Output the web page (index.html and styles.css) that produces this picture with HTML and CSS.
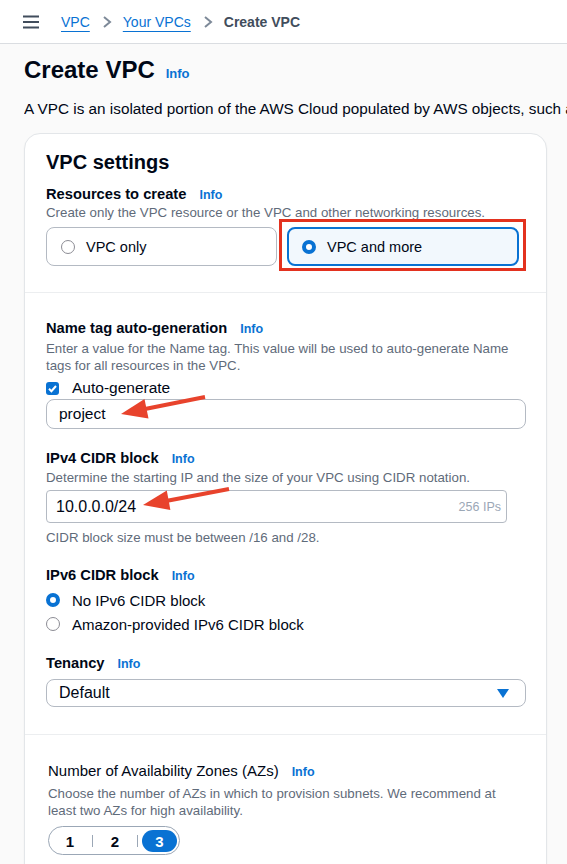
FILE: index.html
```html
<!DOCTYPE html>
<html lang="en">
<head>
<meta charset="utf-8">
<title>Create VPC</title>
<link rel="stylesheet" href="styles.css">
</head>
<body>
<header class="topbar">
  <svg class="menu" width="16" height="16" viewBox="0 0 16 16"><path d="M0 2.5h16M0 8h16M0 13.5h16" stroke="#414d5c" stroke-width="2" fill="none"/></svg>
  <nav class="crumbs">
    <a class="crumb-link" href="#">VPC</a>
    <svg class="chev" width="12" height="14" viewBox="0 0 12 14"><path d="M3 2l6 5-6 5" stroke="#7d8998" stroke-width="2" fill="none"/></svg>
    <a class="crumb-link" href="#">Your VPCs</a>
    <svg class="chev" width="12" height="14" viewBox="0 0 12 14"><path d="M3 2l6 5-6 5" stroke="#7d8998" stroke-width="2" fill="none"/></svg>
    <span class="crumb-current">Create VPC</span>
  </nav>
</header>
<main class="page">
  <div class="title-row"><h1 class="title">Create VPC</h1><a class="info info-lg" href="#">Info</a></div>
  <p class="intro">A VPC is an isolated portion of the AWS Cloud populated by AWS objects, such as Amazon EC2 instances.</p>
  <section class="card">
    <div class="sec sec-top">
      <h2 class="card-title">VPC settings</h2>
      <div class="label-row"><span class="label">Resources to create</span><a class="info" href="#">Info</a></div>
      <p class="desc">Create only the VPC resource or the VPC and other networking resources.</p>
      <div class="tiles">
        <div class="tile"><span class="radio"></span><span>VPC only</span></div>
        <div class="tile tile-on"><span class="radio radio-on"></span><span>VPC and more</span></div>
      </div>
    </div>
    <div class="sec sec-mid">
      <div class="label-row"><span class="label">Name tag auto-generation</span><a class="info" href="#">Info</a></div>
      <p class="desc desc-2">Enter a value for the Name tag. This value will be used to auto-generate Name tags for all resources in the VPC.</p>
      <div class="check-row"><span class="checkbox"><svg width="13" height="13" viewBox="0 0 13 13"><path d="M3 6.8l2.4 2.4L10 4" stroke="#fff" stroke-width="2" fill="none"/></svg></span><span>Auto-generate</span></div>
      <div class="field field-project">project</div>

      <div class="label-row lr-ipv4"><span class="label">IPv4 CIDR block</span><a class="info" href="#">Info</a></div>
      <p class="desc desc-1">Determine the starting IP and the size of your VPC using CIDR notation.</p>
      <div class="field field-cidr"><span>10.0.0.0/24</span><span class="ips">256 IPs</span></div>
      <p class="desc desc-constraint">CIDR block size must be between /16 and /28.</p>

      <div class="label-row lr-ipv6"><span class="label">IPv6 CIDR block</span><a class="info" href="#">Info</a></div>
      <div class="radio-list">
        <div class="radio-row"><span class="radio radio-on"></span><span>No IPv6 CIDR block</span></div>
        <div class="radio-row"><span class="radio"></span><span>Amazon-provided IPv6 CIDR block</span></div>
      </div>

      <div class="label-row lr-tenancy"><span class="label">Tenancy</span><a class="info" href="#">Info</a></div>
      <div class="field field-select"><span>Default</span><svg width="12" height="9" viewBox="0 0 12 9"><path d="M0 0h12L6 9z" fill="#0972d3"/></svg></div>
    </div>
    <div class="sec sec-az">
      <div class="label-row"><span class="label label-plain">Number of Availability Zones (AZs)</span><a class="info" href="#">Info</a></div>
      <p class="desc desc-2 desc-az">Choose the number of AZs in which to provision subnets. We recommend at least two AZs for high availability.</p>
      <div class="segmented">
        <span class="seg">1</span><span class="seg-sep"></span>
        <span class="seg">2</span><span class="seg-sep"></span>
        <span class="seg seg-on">3</span>
      </div>
    </div>
  </section>
</main>
<svg class="annot" width="567" height="864" viewBox="0 0 567 864">
  <rect x="280.5" y="220.5" width="244" height="49" fill="none" stroke="#e3321f" stroke-width="3"/>
  <line x1="205" y1="397" x2="145" y2="409" stroke="#e8432c" stroke-width="4"/>
  <polygon points="121,414 148.5,418.6 144.5,399" fill="#e8432c"/>
  <line x1="229" y1="489" x2="166" y2="501" stroke="#e8432c" stroke-width="4"/>
  <polygon points="143,505 170.4,510 166.8,490.4" fill="#e8432c"/>
</svg>
</body>
</html>
```

FILE: styles.css
```css
html, body {
  margin: 0;
  padding: 0;
}
body {
  position: relative;
  font-family: "Liberation Sans", Arial, sans-serif;
  color: #000716;
  background: #fafafa;
  overflow-x: hidden;
}
a { text-decoration: none; }

.topbar {
  height: 43px;
  background: #fff;
  border-bottom: 1px solid #dadde1;
  display: flex;
  align-items: center;
  padding-left: 23px;
}
.menu { margin-right: 22px; }
.crumbs {
  display: flex;
  align-items: center;
  font-size: 14px;
}
.crumb-link {
  color: #0972d3;
  text-decoration: underline;
  text-underline-offset: 4px;
  text-decoration-thickness: 1px;
}
.chev { margin: 0 10px 0 11px; }
.crumb-current { color: #414d5c; font-weight: 600; }

.page { padding: 0 20px 0 24px; }
.title-row {
  display: flex;
  align-items: baseline;
  height: 28px;
  margin-top: 12px;
}
.title {
  margin: 0;
  font-size: 24px;
  line-height: 28px;
  font-weight: 700;
}
.info {
  color: #0972d3;
  font-weight: 700;
  font-size: 12.5px;
  margin-left: 13px;
}
.info-lg { font-size: 13px; margin-left: 11px; }
.intro {
  margin: 15px -20px 0 0;
  font-size: 15.3px;
  line-height: 20px;
  white-space: nowrap;
  overflow: hidden;
}

.card {
  margin-top: 14px;
  background: #fff;
  border: 1px solid #e3e6e9;
  border-radius: 16px;
  box-shadow: 0 1px 2px rgba(0, 7, 22, 0.05);
}
.sec { padding: 0 20px 0 21px; }
.sec-top { padding-top: 16px; padding-bottom: 26px; }
.sec-mid { border-top: 1px solid #eceef0; padding-top: 25px; padding-bottom: 27px; }
.sec-az { border-top: 1px solid #eceef0; padding-top: 26px; padding-bottom: 40px; padding-left: 23px; }

.card-title {
  margin: 0;
  font-size: 20px;
  line-height: 24px;
  font-weight: 700;
}
.label-row {
  display: flex;
  align-items: baseline;
  height: 20px;
  line-height: 20px;
  overflow: visible;
}
.sec-top .label-row { margin-top: 10px; }
.label { font-size: 14.7px; font-weight: 700; }
.label-plain { font-size: 15px; font-weight: 400; }
.desc {
  margin: 0;
  font-size: 13.3px;
  line-height: 17px;
  color: #5f6b7a;
}
.desc-2 { margin-top: 2px; }
.sec-az .desc-2 { margin-top: 4px; }
.desc-az { max-width: 462px; }
.desc-1 { margin-top: 1px; }
.desc-constraint { margin-top: 6px; }

.tiles {
  margin-top: 6px;
  display: grid;
  grid-template-columns: 231px 232px;
  column-gap: 10px;
}
.tile {
  box-sizing: border-box;
  height: 39px;
  display: flex;
  align-items: center;
  gap: 11px;
  padding-left: 14px;
  border: 1px solid #b4bac3;
  border-radius: 8px;
  font-size: 14.5px;
}
.tile-on {
  border: 2px solid #0972d3;
  background: #f2f8fd;
  padding-left: 13px;
}
.radio {
  box-sizing: border-box;
  width: 14px;
  height: 14px;
  border-radius: 50%;
  border: 1.5px solid #8c8c94;
  background: #fff;
  flex: none;
}
.radio-on { border: 4px solid #0972d3; }

.check-row {
  margin-top: 4px;
  height: 20px;
  display: flex;
  align-items: center;
  gap: 13px;
  font-size: 15.5px;
}
.checkbox {
  width: 13px;
  height: 13px;
  border-radius: 3px;
  background: #0972d3;
  display: flex;
}

.field {
  box-sizing: border-box;
  display: flex;
  align-items: center;
  border: 1px solid #b4bac3;
  font-size: 15.5px;
  background: #fff;
}
.field-project {
  margin-top: 1px;
  height: 30px;
  border-radius: 8px;
  padding-left: 12px;
}
.lr-ipv4 { margin-top: 19px; }
.field-cidr {
  margin-top: 4px;
  width: 461px;
  height: 33px;
  border-radius: 4px;
  justify-content: space-between;
  padding: 0 5px 0 9px;
  font-size: 16px;
}
.ips { font-size: 12.5px; color: #9ba7b6; }
.lr-ipv6 { margin-top: 19px; }
.radio-list { margin-top: 3px; }
.radio-row {
  height: 24px;
  display: flex;
  align-items: center;
  gap: 12px;
  font-size: 15px;
}
.lr-tenancy { margin-top: 17px; }
.field-select {
  margin-top: 6px;
  height: 28px;
  border-radius: 8px;
  justify-content: space-between;
  padding: 0 16px 0 12px;
  font-size: 16px;
}

.segmented {
  margin-top: 7px;
  display: inline-flex;
  align-items: center;
  border: 1px solid #9ba7b6;
  border-radius: 16px;
  padding: 3px 2px 2px 3px;
}
.seg {
  width: 36px;
  height: 22px;
  display: flex;
  align-items: center;
  justify-content: center;
  font-size: 15px;
  font-weight: 600;
  color: #000716;
}
.seg-on {
  width: 35px;
  background: #0972d3;
  color: #fff;
  font-weight: 700;
  border-radius: 12px;
}
.seg-sep {
  width: 1px;
  height: 12px;
  background: #9ba7b6;
  margin: 0 4px;
}

.annot {
  position: absolute;
  top: 0;
  left: 0;
  pointer-events: none;
}
```
